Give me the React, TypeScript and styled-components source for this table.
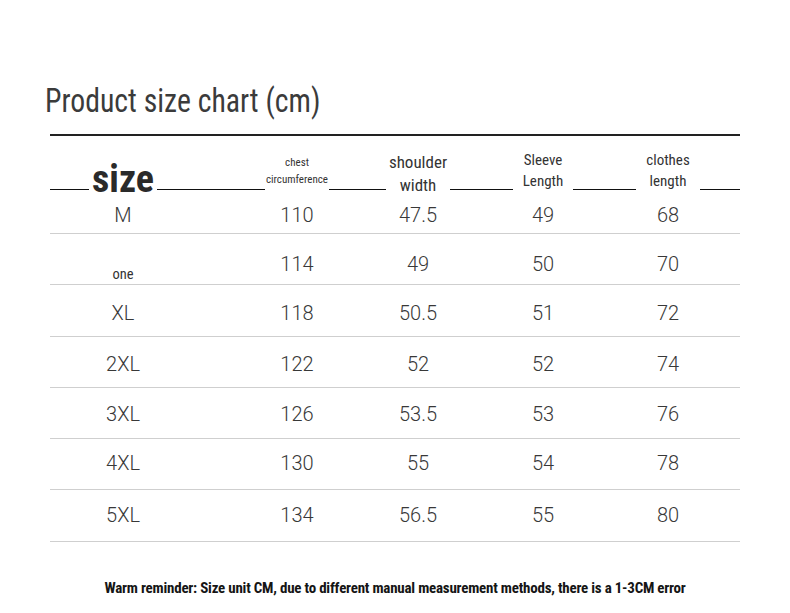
import React from 'react';
import styled, { createGlobalStyle } from 'styled-components';

const NARROW = `"Liberation Sans Narrow", "Roboto Condensed", "DejaVu Sans Condensed", "Liberation Sans", sans-serif`;

const GlobalStyle = createGlobalStyle`
    html, body {
        margin: 0;
        padding: 0;
        background: #ffffff;
    }
`;

const Page = styled.div`
    width: 790px;
    height: 613px;
    background: #ffffff;
    overflow: hidden;
    display: flex;
    flex-direction: column;
`;

const Title = styled.h1`
    margin: 80px 0 14px 45px;
    font-family: ${NARROW};
    font-weight: 400;
    font-size: 34px;
    line-height: 40px;
    color: #3b3b3b;
    white-space: nowrap;
    transform: scaleX(0.875);
    transform-origin: left center;
`;

const Table = styled.div`
    margin-left: 50px;
    width: 690px;
    display: flex;
    flex-direction: column;
`;

const COLUMNS = '146px 202px 40px 210px 40px';

const HeaderRow = styled.div`
    display: grid;
    grid-template-columns: ${COLUMNS};
    align-items: end;
    height: 53px;
    border-top: 2px solid #222;
    border-bottom: 1px solid #111;
`;

const HeaderLabel = styled.div<{ $size: number; $lh: number; $drop: number; $px: number; $bold?: boolean; $pb?: number }>`
    justify-self: center;
    white-space: nowrap;
    text-align: center;
    background: #ffffff;
    padding: 0 ${p => p.$px}px ${p => p.$pb ?? 0}px;
    margin-bottom: ${p => -p.$drop}px;
    font-family: ${NARROW};
    font-size: ${p => p.$size}px;
    line-height: ${p => p.$lh}px;
    font-weight: ${p => (p.$bold ? 700 : 400)};
    color: ${p => (p.$bold ? '#2a2a2a' : '#333')};
`;

// $nudge: how far the text sits off the row's centre (positive = lower)
const Row = styled.div<{ $first?: boolean; $nudge: number }>`
    display: grid;
    grid-template-columns: ${COLUMNS};
    align-items: center;
    box-sizing: border-box;
    height: ${p => (p.$first ? 44 : 51.3)}px;
    padding-top: ${p => Math.max(p.$nudge, 0)}px;
    padding-bottom: ${p => Math.max(-p.$nudge, 0)}px;
    border-bottom: 1px solid #cfcfcf;
`;

const Cell = styled.div`
    justify-self: center;
    white-space: nowrap;
    font-family: Roboto, "Liberation Sans", sans-serif;
    font-weight: 300;
    font-size: 20px;
    color: #383838;
`;

const SmallSize = styled.div`
    justify-self: center;
    margin-top: 20px;
    font-family: ${NARROW};
    font-size: 14.5px;
    color: #333;
`;

const Footer = styled.p`
    margin: 36px 0 0;
    text-align: center;
    font-family: ${NARROW};
    font-weight: 700;
    font-size: 15px;
    line-height: 20px;
    letter-spacing: -0.22px;
    color: #151515;
`;

const rows = [
    { size: 'M', chest: '110', shoulder: '47.5', sleeve: '49', length: '68', nudge: 6 },
    { size: 'one', chest: '114', shoulder: '49', sleeve: '50', length: '70', nudge: 10 },
    { size: 'XL', chest: '118', shoulder: '50.5', sleeve: '51', length: '72', nudge: 6 },
    { size: '2XL', chest: '122', shoulder: '52', sleeve: '52', length: '74', nudge: 4 },
    { size: '3XL', chest: '126', shoulder: '53.5', sleeve: '53', length: '76', nudge: 1 },
    { size: '4XL', chest: '130', shoulder: '55', sleeve: '54', length: '78', nudge: -2 },
    { size: '5XL', chest: '134', shoulder: '56.5', sleeve: '55', length: '80', nudge: -2 },
];

export default function App() {
    return (
        <Page>
            <GlobalStyle />
            <Title>Product size chart (cm)</Title>
            <Table>
                <HeaderRow>
                    <HeaderLabel $size={38} $lh={38} $drop={9} $px={3} $bold>size</HeaderLabel>
                    <HeaderLabel $size={11} $lh={17} $drop={4} $px={1} $pb={5}>chest<br />circumference</HeaderLabel>
                    <HeaderLabel $size={17} $lh={23} $drop={8} $px={3}>shoulder<br />width</HeaderLabel>
                    <HeaderLabel $size={15} $lh={21} $drop={5} $px={10} $pb={2}>Sleeve<br />Length</HeaderLabel>
                    <HeaderLabel $size={15} $lh={21} $drop={5} $px={10} $pb={2}>clothes<br />length</HeaderLabel>
                </HeaderRow>
                {rows.map((r, i) => (
                    <Row key={r.size} $first={i === 0} $nudge={r.nudge}>
                        {r.size === 'one' ? <SmallSize>one</SmallSize> : <Cell>{r.size}</Cell>}
                        <Cell>{r.chest}</Cell>
                        <Cell>{r.shoulder}</Cell>
                        <Cell>{r.sleeve}</Cell>
                        <Cell>{r.length}</Cell>
                    </Row>
                ))}
            </Table>
            <Footer>Warm reminder: Size unit CM, due to different manual measurement methods, there is a 1-3CM error</Footer>
        </Page>
    );
}
